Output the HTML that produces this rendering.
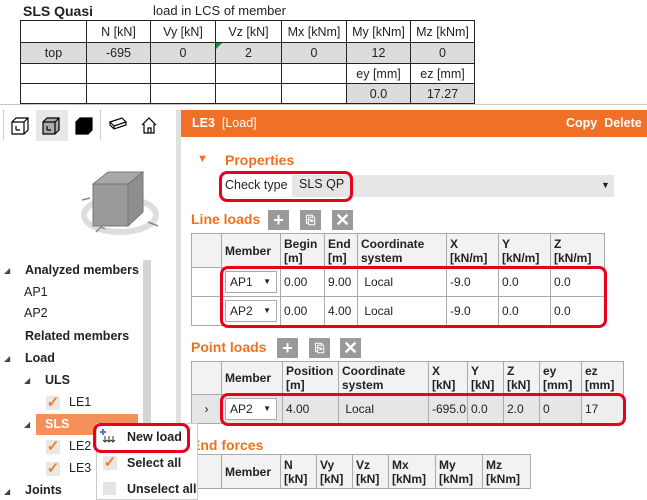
<!DOCTYPE html>
<html><head><meta charset="utf-8"><style>
*{box-sizing:border-box;margin:0;padding:0}
body{width:647px;height:500px;overflow:hidden;background:#fff;font-family:"Liberation Sans",sans-serif;font-size:12px;color:#222;position:relative}
.a{position:absolute}
.b{font-weight:bold}
.or{color:#f07020;font-weight:bold;font-size:14px}
table{border-collapse:collapse;position:absolute;table-layout:fixed}
td{border:1px solid #aaa;padding:0 3px;overflow:hidden;white-space:nowrap}
.top td{border:1px solid #222;text-align:center;font-size:12.5px;padding:0}
.g{background:#dcdcdc}
.hd td{background:#f2f2f2;font-size:12px;line-height:14px;vertical-align:middle}
.sel{background:#fff;border:1px solid #aaa;display:inline-block;width:52px;height:22px;line-height:20px;padding-left:4px;position:relative}
.sel:after{content:"▼";position:absolute;right:5px;font-size:8px;top:0}
.red{position:absolute;border:3px solid #e8001c;border-radius:8px}
.btn{position:absolute;width:21px;height:20px;background:#9a9a9a;color:#fff;text-align:center;font-weight:bold;font-size:18px;line-height:20px}
.tr{position:absolute;font-size:12.5px}
.tri{position:absolute;font-size:8px;color:#444}
.chk{position:absolute;width:14px;height:14px;background:#e8e8e8;color:#f08020;font-size:15px;line-height:13px;font-weight:bold;text-align:center}
</style></head><body>
<div class="a b" style="left:23px;top:3px;font-size:14px">SLS Quasi</div>
<div class="a" style="left:153px;top:3px;font-size:13px">load in LCS of member</div>
<table class="top" style="left:20px;top:20px;width:454px">
<colgroup><col style="width:66px"><col style="width:64px"><col style="width:65px"><col style="width:66px"><col style="width:65px"><col style="width:64px"><col style="width:64px"></colgroup>
<tr style="height:22px"><td></td><td>N [kN]</td><td>Vy [kN]</td><td>Vz [kN]</td><td>Mx [kNm]</td><td>My [kNm]</td><td>Mz [kNm]</td></tr>
<tr style="height:21px" class="g"><td class="g">top</td><td class="g">-695</td><td class="g">0</td><td class="g" style="position:relative">2<span style="position:absolute;left:0;top:0;border-top:6px solid #1a8a3a;border-right:6px solid transparent"></span></td><td class="g">0</td><td class="g">12</td><td class="g">0</td></tr>
<tr style="height:20px"><td></td><td></td><td></td><td></td><td></td><td>ey [mm]</td><td>ez [mm]</td></tr>
<tr style="height:20px"><td></td><td></td><td></td><td></td><td></td><td class="g">0.0</td><td class="g">17.27</td></tr>
</table>
<div class="a" style="left:0;top:104px;width:647px;height:1px;background:#c8c8c8"></div>
<div class="a" style="left:3px;top:110px;width:1px;height:30px;background:#ccc"></div>
<div class="a" style="left:36px;top:110px;width:32px;height:31px;background:#e8e8e8"></div>
<div class="a" style="left:100px;top:110px;width:1px;height:30px;background:#ccc"></div>
<svg class="a" style="left:0;top:110px" width="170" height="32" fill="none" stroke="#000" stroke-width="1.2">
<path d="M12 12h12v12H12zM12 12l4-4h12v12l-4 4M24 12l4-4M16 20v-4 M16 20h4" />
<path d="M43 12h12v12H43zM43 12l4-4h12v12l-4 4M55 12l4-4" fill="#aaa"/><path d="M47 20v-4M47 20h4"/>
<path d="M76 12h12v12H76zM76 12l4-4h12v12l-4 4z" fill="#000"/>
<path d="M110 12l12-4 4 4-12 4zM110 12v3l4 4 12-4v-3M114 16v3"/>
<path d="M142 15l7-7 7 7M144 14v9h10v-9M148 23v-5h3v5"/>
</svg>
<svg class="a" style="left:60px;top:160px" width="110" height="80">
<ellipse cx="60" cy="55" rx="36" ry="17" fill="none" stroke="#ddd" stroke-width="6"/>
<path d="M33 24h35v42H33z" fill="#9a9a9a" stroke="#777"/>
<path d="M33 24l15-12h35l-15 12z" fill="#a8a8a8" stroke="#777"/>
<path d="M68 24l15-12v40l-15 14z" fill="#8e8e8e" stroke="#777"/>
<path d="M36 72l5-5 4 2M22 40l8-2M88 62l10 4" stroke="#888" stroke-width="1.5" fill="none"/>
</svg>
<div class="a" style="left:176px;top:110px;width:5px;height:390px;background:#e0e0e0"></div>
<div class="a" style="left:143px;top:260px;width:8px;height:170px;background:#d4d4d4"></div>
<div class="tri" style="left:4px;top:266px">◢</div><div class="tr b" style="left:25px;top:263px">Analyzed members</div>
<div class="tr" style="left:24px;top:285px">AP1</div>
<div class="tr" style="left:24px;top:306px">AP2</div>
<div class="tr b" style="left:25px;top:329px">Related members</div>
<div class="tri" style="left:4px;top:354px">◢</div><div class="tr b" style="left:25px;top:351px">Load</div>
<div class="tri" style="left:24px;top:376px">◢</div><div class="tr b" style="left:45px;top:373px">ULS</div>
<div class="chk" style="left:46px;top:396px">✓</div><div class="tr" style="left:69px;top:395px">LE1</div>
<div class="a" style="left:36px;top:414px;width:102px;height:21px;background:#f5905a"></div>
<div class="tri" style="left:24px;top:420px">◢</div><div class="tr b" style="left:45px;top:417px;color:#fff">SLS</div>
<div class="chk" style="left:46px;top:440px">✓</div><div class="tr" style="left:69px;top:439px">LE2</div>
<div class="chk" style="left:46px;top:462px">✓</div><div class="tr" style="left:69px;top:461px">LE3</div>
<div class="tri" style="left:4px;top:487px">◢</div><div class="tr b" style="left:25px;top:483px">Joints</div>
<div class="a" style="left:181px;top:110px;width:466px;height:27px;background:#f07028"></div>
<div class="a b" style="left:192px;top:116px;color:#fff;font-size:12.5px">LE3 &nbsp;<span style="font-weight:normal">[Load]</span></div>
<div class="a b" style="left:566px;top:116px;color:#fff;font-size:12.5px">Copy &nbsp;Delete</div>
<div class="a" style="left:197px;top:153px;color:#f07020;font-size:11px">▼</div>
<div class="a or" style="left:225px;top:152px">Properties</div>
<div class="a" style="left:292px;top:175px;width:322px;height:22px;background:#e6e6e6"></div>
<div class="a" style="left:225px;top:178px;font-size:12.5px">Check type</div>
<div class="a" style="left:299px;top:177px;font-size:12.5px">SLS QP</div>
<div class="a" style="left:601px;top:180px;font-size:9px">▼</div>
<div class="red" style="left:219px;top:171px;width:134px;height:31px"></div>
<div class="a or" style="left:191px;top:211px">Line loads</div>
<div class="btn" style="left:268px;top:210px">+</div><div class="btn" style="left:300px;top:210px;font-size:12px">⎘</div><div class="btn" style="left:332px;top:210px">✕</div>
<table style="left:191px;top:233px;width:413px">
<colgroup><col style="width:30px"><col style="width:59px"><col style="width:44px"><col style="width:33px"><col style="width:89px"><col style="width:52px"><col style="width:52px"><col style="width:54px"></colgroup>
<tr class="hd b" style="height:34px"><td></td><td>Member</td><td>Begin<br>[m]</td><td>End<br>[m]</td><td>Coordinate<br>system</td><td>X<br>[kN/m]</td><td>Y<br>[kN/m]</td><td>Z<br>[kN/m]</td></tr>
<tr style="height:29px"><td></td><td><span class="sel">AP1</span></td><td>0.00</td><td>9.00</td><td>&nbsp;Local</td><td>-9.0</td><td>0.0</td><td>0.0</td></tr>
<tr style="height:29px"><td></td><td><span class="sel">AP2</span></td><td>0.00</td><td>4.00</td><td>&nbsp;Local</td><td>-9.0</td><td>0.0</td><td>0.0</td></tr>
</table>
<div class="red" style="left:220px;top:266px;width:387px;height:62px"></div>
<div class="a or" style="left:191px;top:339px">Point loads</div>
<div class="btn" style="left:277px;top:338px">+</div><div class="btn" style="left:309px;top:338px;font-size:12px">⎘</div><div class="btn" style="left:340px;top:338px">✕</div>
<table style="left:191px;top:361px;width:432px">
<colgroup><col style="width:30px"><col style="width:61px"><col style="width:56px"><col style="width:90px"><col style="width:39px"><col style="width:36px"><col style="width:36px"><col style="width:42px"><col style="width:42px"></colgroup>
<tr class="hd b" style="height:33px"><td></td><td>Member</td><td>Position<br>[m]</td><td>Coordinate<br>system</td><td>X<br>[kN]</td><td>Y<br>[kN]</td><td>Z<br>[kN]</td><td>ey<br>[mm]</td><td>ez<br>[mm]</td></tr>
<tr style="height:29px;background:#e6e6e6"><td style="text-align:center">›</td><td><span class="sel">AP2</span></td><td>4.00</td><td>&nbsp;Local</td><td>-695.0</td><td>0.0</td><td>2.0</td><td>0</td><td style="background:#eee;border-bottom:1px solid #f07020;border-left:1px solid #f07020">17</td></tr>
</table>
<div class="red" style="left:220px;top:393px;width:406px;height:33px"></div>
<div class="a or" style="left:191px;top:437px">End forces</div>
<table style="left:191px;top:454px;width:339px">
<colgroup><col style="width:30px"><col style="width:59px"><col style="width:36px"><col style="width:36px"><col style="width:36px"><col style="width:47px"><col style="width:47px"><col style="width:48px"></colgroup>
<tr class="hd b" style="height:34px"><td></td><td>Member</td><td>N<br>[kN]</td><td>Vy<br>[kN]</td><td>Vz<br>[kN]</td><td>Mx<br>[kNm]</td><td>My<br>[kNm]</td><td>Mz<br>[kNm]</td></tr>
</table>
<div class="a" style="left:96px;top:423px;width:102px;height:77px;background:#fff;border:1px solid #ccc"></div>
<svg class="a" style="left:100px;top:428px" width="16" height="16"><path d="M3 1v6M0 4h6" stroke="#4a7fd0" stroke-width="2"/><path d="M5 8v6M9 8v6M13 8v6M3 12l2 2 2-2M7 12l2 2 2-2M11 12l2 2 2-2" stroke="#333" fill="none"/></svg>
<div class="a b" style="left:127px;top:430px;font-size:12.5px">New load</div>
<div class="red" style="left:93px;top:423px;width:97px;height:30px"></div>
<div class="chk" style="left:103px;top:456px">✓</div>
<div class="a b" style="left:127px;top:456px;font-size:12.5px">Select all</div>
<div class="a" style="left:103px;top:482px;width:13px;height:13px;background:#e4e4e4"></div>
<div class="a b" style="left:127px;top:482px;font-size:12.5px">Unselect all</div>
</body></html>
